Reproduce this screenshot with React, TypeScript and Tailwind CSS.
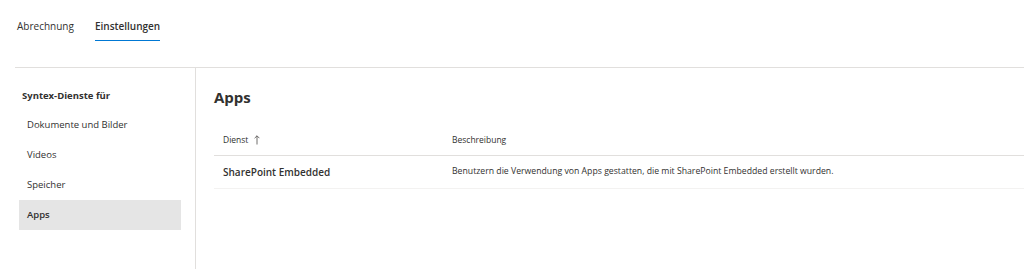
export default function App() {
  const items = ['Dokumente und Bilder', 'Videos', 'Speicher', 'Apps']
  return (
    <div className="w-[1024px] h-[269px] bg-white text-[#323130] overflow-hidden font-['Open_Sans',sans-serif]">
      {/* Tabs */}
      <div className="h-[67px] flex items-start pl-[17px] pt-[17px] gap-[21px] text-[10px]">
        <div className="h-[24px] flex flex-col">
          <span className="leading-[18px]">Abrechnung</span>
        </div>
        <div className="h-[24px] flex flex-col">
          <span className="leading-[18px] font-semibold">Einstellungen</span>
          <div className="mt-[5px] h-[2px] bg-[#0078d4]" />
        </div>
      </div>

      <div className="ml-[15px] border-t border-[#e1dfdd] flex h-[202px]">
        {/* Sidebar */}
        <div className="w-[181px] border-r border-[#e1dfdd] pl-[4px]">
          <div className="h-[42px] flex items-center pl-[3px] pt-[14px] text-[9.5px] font-bold">
            Syntex-Dienste für
          </div>
          {items.map((item) => (
            <div
              key={item}
              className={
                item === 'Apps'
                  ? 'w-[162px] h-[30px] flex items-center pl-[8px] text-[9.5px] font-semibold bg-[#e5e5e5]'
                  : 'w-[162px] h-[30px] flex items-center pl-[8px] text-[9.5px]'
              }
            >
              {item}
            </div>
          ))}
        </div>

        {/* Main */}
        <div className="flex-1 pl-[18px]">
          <h2 className="h-[44px] flex items-end pb-[7px] text-[15px] font-bold leading-none">Apps</h2>
          <div className="h-[44px] flex items-center pt-[13px] border-b border-[#e1dfdd] text-[8.5px]">
            <div className="w-[238px] pl-[9px] flex items-center gap-[6px]">
              <span>Dienst</span>
              <svg width="6" height="10" viewBox="0 0 6 10" fill="none" stroke="#605e5c" strokeWidth="0.9">
                <path d="M3 0.8 V9.5 M0.6 3.2 L3 0.8 L5.4 3.2" />
              </svg>
            </div>
            <div>Beschreibung</div>
          </div>
          <div className="h-[33px] flex items-center border-b border-[#f3f2f1]">
            <div className="w-[238px] pl-[9px] text-[10px] font-semibold">SharePoint Embedded</div>
            <div className="text-[8.7px]">
              Benutzern die Verwendung von Apps gestatten, die mit SharePoint Embedded erstellt wurden.
            </div>
          </div>
        </div>
      </div>
    </div>
  )
}
